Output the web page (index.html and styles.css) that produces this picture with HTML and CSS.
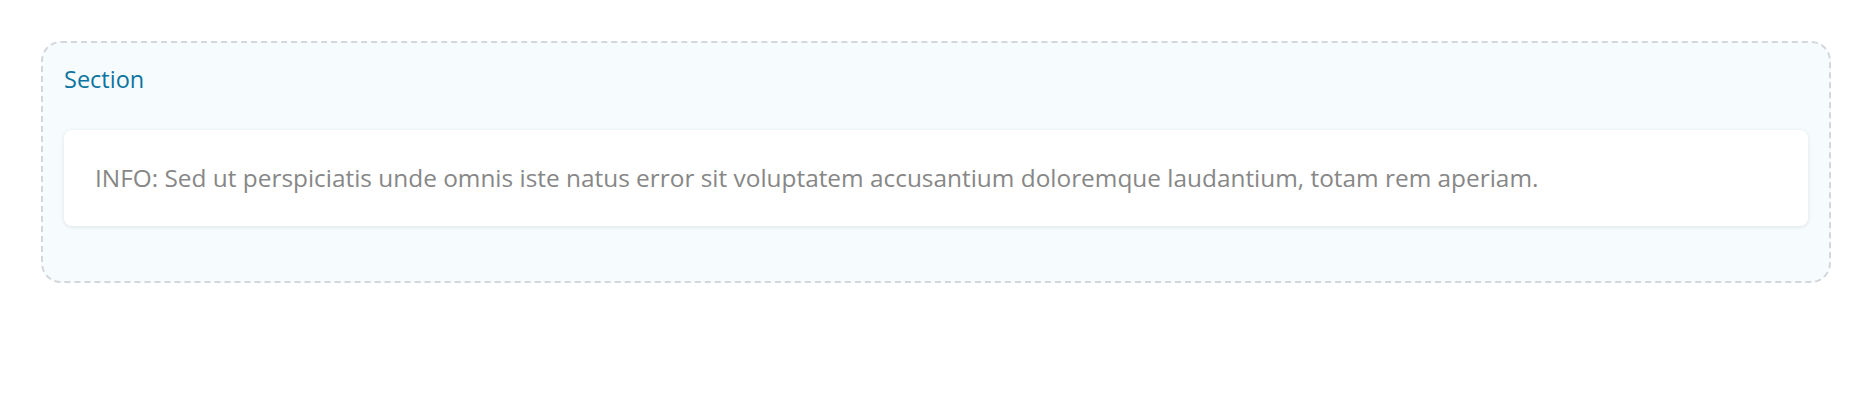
FILE: index.html
```html
<!DOCTYPE html>
<html lang="en">
<head>
  <meta charset="UTF-8">
  <title>Section</title>
  <link rel="stylesheet" href="styles.css">
</head>
<body>

  <section class="section">
    <h2 class="section-title">Section</h2>
    <div class="card">
      <p class="card-text">INFO: Sed ut perspiciatis unde omnis iste natus error sit voluptatem accusantium doloremque laudantium, totam rem aperiam.</p>
    </div>
  </section>

</body>
</html>
```

FILE: styles.css
```css
body {
  margin: 0;
  padding: 41px 41px;
  font-family: 'Open Sans', 'Noto Sans', sans-serif;
  background-color: #fff;
  color: #333;
}
.section {
  display: flex;
  flex-direction: column;
  gap: 35px;
  padding: 21px 21px 55px;
  background: #f6fbfd;
  border: 2px dashed #d3d7dc;
  border-radius: 20px;
}
.section-title {
  margin: 0;
  font-size: 23.5px;
  font-weight: 400;
  line-height: 1.3;
  color: #0b74a0;
}
.card {
  padding: 30px 31px;
  background: #fff;
  border-radius: 8px;
  box-shadow: 0 1px 4px rgba(0,0,0,0.1);
}
.card-text {
  margin: 0;
  font-size: 24.4px;
  line-height: 36px;
  color: #878787;
}
```
